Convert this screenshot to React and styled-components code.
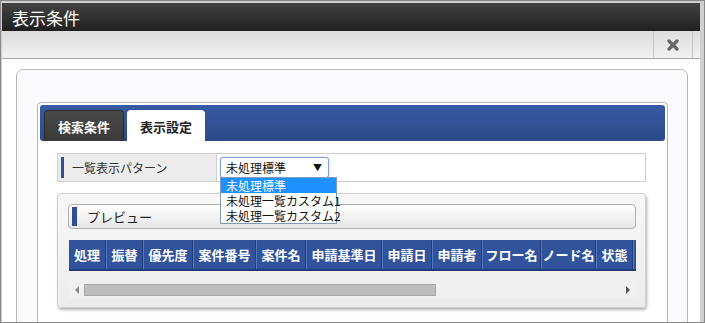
import styled, { createGlobalStyle } from 'styled-components'

const GlobalStyle = createGlobalStyle`
  html, body {
    margin: 0;
    padding: 0;
    background: #ffffff;
  }
  body {
    font-family: "Noto Sans CJK JP", "Noto Sans", sans-serif;
  }`

const Dialog = styled.div`
  width: 705px;
  height: 323px;
  box-sizing: border-box;
  border: 1px solid #888;
  padding: 2px 4px 0 1px;
  background: #cfcfcf;
  display: flex;
  flex-direction: column;
  overflow: hidden;`

const TitleBar = styled.div`
  height: 28px;
  flex: none;
  display: flex;
  align-items: center;
  padding-left: 10px;
  background: linear-gradient(#434343, #1f1f1f);
  color: #fff;
  font-size: 17px;
  line-height: 1;`

const Toolbar = styled.div`
  height: 27px;
  flex: none;
  display: flex;
  justify-content: flex-end;
  background: linear-gradient(#dcdcdc, #f1f1f1);
  border-bottom: 1px solid #a8a8a8;`

const CloseCell = styled.div`
  width: 38px;
  display: flex;
  align-items: center;
  justify-content: center;
  border-left: 1px solid #c4c4c4;
  border-right: 1px solid #c4c4c4;
  margin-right: 7px;`

const Content = styled.div`
  flex: 1;
  min-height: 0;
  overflow: hidden;
  background: #fff;
  padding: 10px 12px 0 14px;`

const Panel = styled.div`
  height: 300px;
  box-sizing: border-box;
  border: 1px solid #b8b8b8;
  border-radius: 7px;
  background: #fafafd;
  padding: 32px 19px 0 20px;`

const TabBox = styled.div`
  height: 260px;
  box-sizing: border-box;
  border: 1px solid #b4b4b4;
  border-radius: 4px;
  background: #fff;
  padding: 2px;`

const TabHeader = styled.div`
  height: 36px;
  box-sizing: border-box;
  border-radius: 3px;
  background: linear-gradient(#375aa3, #2c4a88);
  display: flex;
  align-items: flex-end;
  gap: 3px;
  padding-left: 4px;`

const Tab = styled.div`
  height: 31px;
  box-sizing: border-box;
  width: ${({ $w }) => $w}px;
  border-radius: 4px 4px 0 0;
  display: flex;
  align-items: center;
  justify-content: center;
  font-size: 13px;
  font-weight: bold;
  color: ${({ $active }) => ($active ? '#222' : '#fff')};
  background: ${({ $active }) => ($active ? '#fff' : 'linear-gradient(#4a4a4a, #3a3a3a)')};
  border: 1px solid ${({ $active }) => ($active ? '#fff' : '#2a2a2a')};
  border-bottom: none;`

const TabBody = styled.div`
  padding: 12px 17px 0 17px;
  position: relative;`

const FieldRow = styled.div`
  height: 29px;
  box-sizing: border-box;
  border: 1px solid #cfcfcf;
  display: flex;
  margin-right: 2px;`

const FieldLabel = styled.div`
  width: 159px;
  box-sizing: border-box;
  background: #ececec;
  border-right: 1px solid #cfcfcf;
  display: flex;
  align-items: center;
  padding: 3px 0 3px 3px;
  font-size: 12px;
  color: #333;`

const LabelBar = styled.span`
  width: 3px;
  align-self: stretch;
  background: #2f4f94;
  margin-right: 8px;`

const FieldValue = styled.div`
  flex: 1;
  display: flex;
  align-items: center;
  padding-left: 3px;`

const SelectBox = styled.div`
  width: 109px;
  height: 21px;
  box-sizing: border-box;
  border: 1px solid #7d9fdc;
  border-radius: 3px;
  box-shadow: 0 0 2px rgba(90, 140, 230, 0.5);
  display: flex;
  align-items: center;
  justify-content: space-between;
  padding: 0 6px 0 5px;
  font-size: 12px;
  color: #111;
  background: #fff;`

const Arrow = styled.span`
  font-size: 9px;
  color: #111;`

const Options = styled.div`
  position: absolute;
  left: 180px;
  top: 36px;
  width: 117px;
  box-sizing: border-box;
  border: 1px solid #7f9db9;
  background: #fff;
  z-index: 2;`

const Option = styled.div`
  height: 15px;
  line-height: 15px;
  padding-left: 5px;
  font-size: 12px;
  color: ${({ $selected }) => ($selected ? '#fff' : '#111')};
  background: ${({ $selected }) => ($selected ? '#1e90ff' : '#fff')};
  white-space: nowrap;`

const Preview = styled.div`
  margin-top: 11px;
  width: 589px;
  box-sizing: border-box;
  border: 1px solid #cfcfcf;
  border-radius: 4px;
  background: linear-gradient(#f7f7f7, #ececec);
  box-shadow: 1px 2px 3px rgba(0, 0, 0, 0.3);
  padding: 10px 9px 9px 10px;`

const PreviewHead = styled.div`
  height: 25px;
  box-sizing: border-box;
  border: 1px solid #b0b0b0;
  border-radius: 4px;
  background: linear-gradient(#ffffff, #e6e6e6);
  display: flex;
  align-items: center;
  padding: 2px 0 2px 3px;
  font-size: 13px;
  color: #222;`

const HeadBar = styled.span`
  width: 5px;
  align-self: stretch;
  background: #2f4f94;
  margin-right: 10px;`

const TableHead = styled.div`
  margin-top: 11px;
  margin-left: 1px;
  height: 31px;
  box-sizing: border-box;
  display: flex;
  background: #30539c;
  border-bottom: 2px solid #1f3a74;
  overflow: hidden;`

const HeadCell = styled.div`
  width: ${({ $w }) => $w}px;
  flex: none;
  box-sizing: border-box;
  display: flex;
  align-items: center;
  justify-content: center;
  border-right: 1px solid #223f7c;
  border-left: 1px solid #5678bd;
  color: #fff;
  font-size: 13px;
  font-weight: bold;
  white-space: nowrap;
  &:first-child {
    border-left: none;
  }`

const ScrollBar = styled.div`
  margin-top: 10px;
  margin-left: 1px;
  height: 17px;
  background: #f0f0f0;
  display: flex;
  align-items: center;
  padding: 0 6px;
  gap: 5px;`

const ScrollThumb = styled.div`
  width: 352px;
  height: 12px;
  box-sizing: border-box;
  background: #bcbcbc;
  border: 1px solid #a8a8a8;`

const ScrollArrow = styled.svg`
  flex: none;`

const Spacer = styled.div`
  flex: 1;`

const columns = [
  ['処理', 37],
  ['振替', 37],
  ['優先度', 50],
  ['案件番号', 63],
  ['案件名', 50],
  ['申請基準日', 76],
  ['申請日', 50],
  ['申請者', 50],
  ['フロー名', 59],
  ['ノード名', 55],
  ['状態', 37],
  ['', 40],
]

function App() {
  return (
    <>
      <GlobalStyle />
      <Dialog>
        <TitleBar>表示条件</TitleBar>
        <Toolbar>
          <CloseCell>
            <svg width="12" height="12" viewBox="0 0 12 12">
              <path d="M2 2 L10 10 M10 2 L2 10" stroke="#666" strokeWidth="3.2" strokeLinecap="round" />
            </svg>
          </CloseCell>
        </Toolbar>
        <Content>
          <Panel>
            <TabBox>
              <TabHeader>
                <Tab $w={80}>検索条件</Tab>
                <Tab $w={78} $active>表示設定</Tab>
              </TabHeader>
              <TabBody>
                <FieldRow>
                  <FieldLabel>
                    <LabelBar />
                    一覧表示パターン
                  </FieldLabel>
                  <FieldValue>
                    <SelectBox>
                      未処理標準
                      <Arrow>▼</Arrow>
                    </SelectBox>
                  </FieldValue>
                </FieldRow>
                <Options>
                  <Option $selected>未処理標準</Option>
                  <Option>未処理一覧カスタム1</Option>
                  <Option>未処理一覧カスタム2</Option>
                </Options>
                <Preview>
                  <PreviewHead>
                    <HeadBar />
                    プレビュー
                  </PreviewHead>
                  <TableHead>
                    {columns.map(([name, w], i) => (
                      <HeadCell key={i} $w={w}>{name}</HeadCell>
                    ))}
                  </TableHead>
                  <ScrollBar>
                    <ScrollArrow width="4" height="8" viewBox="0 0 4 8">
                      <path d="M4 0 L0 4 L4 8 Z" fill="#888" />
                    </ScrollArrow>
                    <ScrollThumb />
                    <Spacer />
                    <ScrollArrow width="4" height="8" viewBox="0 0 4 8">
                      <path d="M0 0 L4 4 L0 8 Z" fill="#555" />
                    </ScrollArrow>
                  </ScrollBar>
                </Preview>
              </TabBody>
            </TabBox>
          </Panel>
        </Content>
      </Dialog>
    </>
  )
}

export default App
